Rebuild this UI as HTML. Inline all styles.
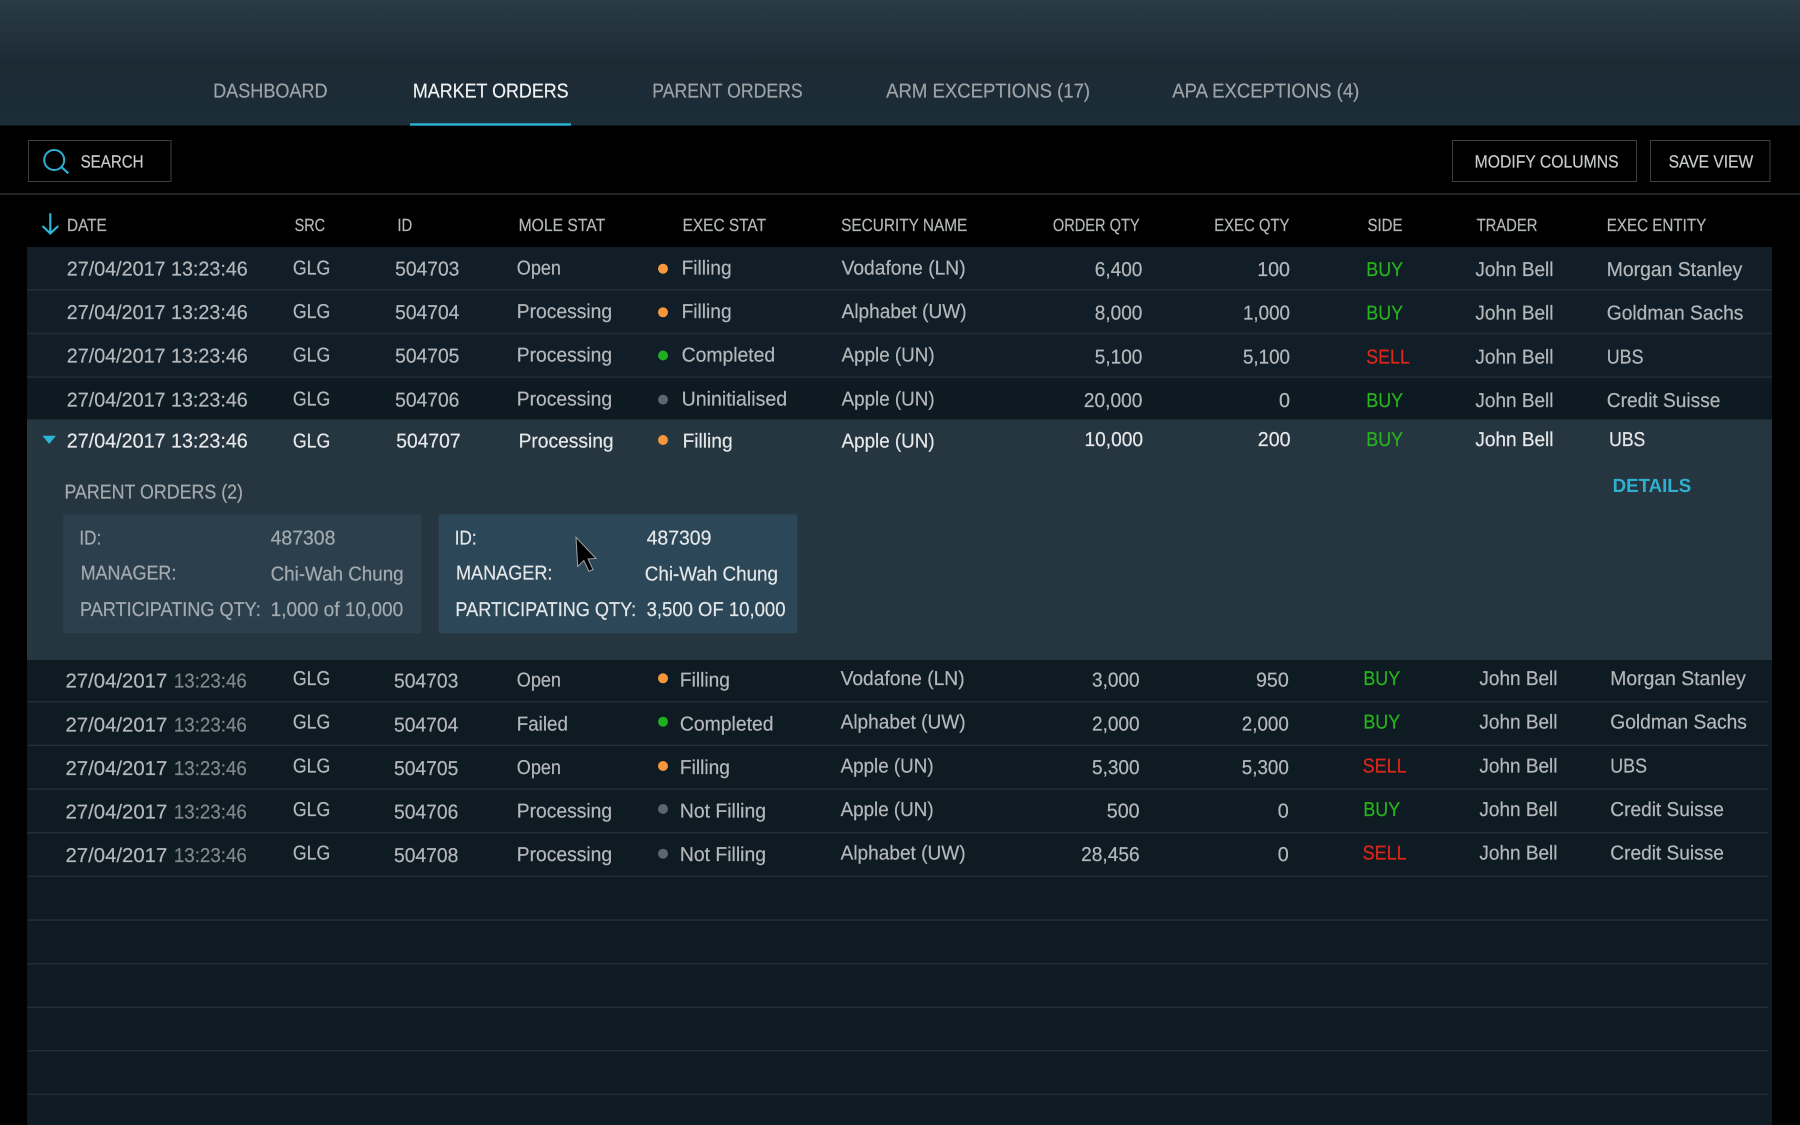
<!DOCTYPE html>
<html>
<head>
<meta charset="utf-8">
<style>
html,body{margin:0;padding:0;width:1800px;height:1125px;overflow:hidden;background:#000}
svg{display:block;position:absolute;left:0;top:0;filter:blur(.3px)}
text{font-family:"Liberation Sans",sans-serif;font-size:20px;color:#b4b8bb;fill:currentColor;stroke:currentColor;stroke-width:.2px;text-rendering:geometricPrecision;transform:translate(-.4px,-.7px)}
.tab{color:#9da3a7}
.act{color:#f0f2f3}
.sm{font-size:17.6px;color:#b3b7b9}
.btn{font-size:17.6px;color:#c8cbcd}
.w{color:#e6e8ea}
.dim{color:#81878b}
.g{color:#27b41c}
.r{color:#e0261a}
.c1{color:#a4abb0}
.c2{color:#e4e7e9}
.det{color:#2fb0d0;font-size:19px;font-weight:bold;stroke-width:0}
</style>
</head>
<body>
<svg width="1800" height="1125" viewBox="0 0 1800 1125" xmlns="http://www.w3.org/2000/svg">
<defs>
<linearGradient id="hd" x1="0" y1="0" x2="0" y2="1">
<stop offset="0" stop-color="#2a3b46"/>
<stop offset="0.5" stop-color="#1c2a34"/>
<stop offset="1" stop-color="#1c2d38"/>
</linearGradient>
</defs>
<rect width="1800" height="1125" fill="#000"/>
<rect width="1800" height="125.5" fill="url(#hd)"/>
<rect x="410" y="123.3" width="161" height="2.4" fill="#2bb5d9"/>

<text class="tab" x="213.5" y="98" textLength="114.5" lengthAdjust="spacingAndGlyphs">DASHBOARD</text>
<text class="act" x="413.3" y="98" textLength="155.7" lengthAdjust="spacingAndGlyphs">MARKET ORDERS</text>
<text class="tab" x="652.7" y="98" textLength="150.3" lengthAdjust="spacingAndGlyphs">PARENT ORDERS</text>
<text class="tab" x="886.5" y="98" textLength="204" lengthAdjust="spacingAndGlyphs">ARM EXCEPTIONS (17)</text>
<text class="tab" x="1172.7" y="98" textLength="187" lengthAdjust="spacingAndGlyphs">APA EXCEPTIONS (4)</text>

<rect x="28.5" y="140.5" width="142.5" height="41" fill="none" stroke="#3b4044"/>
<circle cx="54.2" cy="160" r="10" fill="none" stroke="#2bb0d3" stroke-width="2"/>
<path d="M61 166.7 L68.3 173.3" stroke="#2bb0d3" stroke-width="2.2" fill="none"/>
<text class="btn" x="81" y="168" textLength="63" lengthAdjust="spacingAndGlyphs">SEARCH</text>
<rect x="1452.5" y="140.5" width="184" height="41" fill="none" stroke="#3b4044"/>
<text class="btn" x="1475" y="168" textLength="144" lengthAdjust="spacingAndGlyphs">MODIFY COLUMNS</text>
<rect x="1650.5" y="140.5" width="119.5" height="41" fill="none" stroke="#3b4044"/>
<text class="btn" x="1669" y="168" textLength="84.6" lengthAdjust="spacingAndGlyphs">SAVE VIEW</text>
<rect x="0" y="193.3" width="1800" height="1.5" fill="#2b3034"/>

<path d="M50.3 213.3 V233.5 M42.5 226 L50.3 233.5 L58.2 226" fill="none" stroke="#2bb5d9" stroke-width="2.2"/>
<text class="sm" x="67.4" y="231.7" textLength="39.8" lengthAdjust="spacingAndGlyphs">DATE</text>
<text class="sm" x="295" y="231.7" textLength="30.5" lengthAdjust="spacingAndGlyphs">SRC</text>
<text class="sm" x="397.8" y="231.7" textLength="14.9" lengthAdjust="spacingAndGlyphs">ID</text>
<text class="sm" x="519" y="231.7" textLength="86.6" lengthAdjust="spacingAndGlyphs">MOLE STAT</text>
<text class="sm" x="683" y="231.7" textLength="83.4" lengthAdjust="spacingAndGlyphs">EXEC STAT</text>
<text class="sm" x="841.5" y="231.7" textLength="126.2" lengthAdjust="spacingAndGlyphs">SECURITY NAME</text>
<text class="sm" x="1053.3" y="231.7" textLength="86.7" lengthAdjust="spacingAndGlyphs">ORDER QTY</text>
<text class="sm" x="1214.6" y="231.7" textLength="75.2" lengthAdjust="spacingAndGlyphs">EXEC QTY</text>
<text class="sm" x="1367.9" y="231.7" textLength="35" lengthAdjust="spacingAndGlyphs">SIDE</text>
<text class="sm" x="1477" y="231.7" textLength="60.8" lengthAdjust="spacingAndGlyphs">TRADER</text>
<text class="sm" x="1607.2" y="231.7" textLength="99.4" lengthAdjust="spacingAndGlyphs">EXEC ENTITY</text>

<!-- table backgrounds -->
<rect x="27" y="247" width="1745" height="172.5" fill="#111e27"/>
<rect x="27" y="376" width="1745" height="43.5" fill="#0e1a22"/>
<rect x="27" y="419.5" width="1745" height="240.5" fill="#263640"/>
<rect x="27" y="660" width="1745" height="465" fill="#0f1b23"/>
<g fill="#1f2e38">
<rect x="27" y="289" width="1745" height="1.5"/>
<rect x="27" y="332.7" width="1745" height="1.5"/>
<rect x="27" y="376.3" width="1745" height="1.5"/>
<rect x="27" y="701" width="1741" height="1.5"/>
<rect x="27" y="744.6" width="1741" height="1.5"/>
<rect x="27" y="788.3" width="1741" height="1.5"/>
<rect x="27" y="832" width="1741" height="1.5"/>
<rect x="27" y="875.6" width="1741" height="1.5"/>
<rect x="27" y="919.3" width="1741" height="1.5"/>
<rect x="27" y="963" width="1741" height="1.5"/>
<rect x="27" y="1006.6" width="1741" height="1.5"/>
<rect x="27" y="1050" width="1741" height="1.5"/>
<rect x="27" y="1093.6" width="1741" height="1.5"/>
</g>

<!-- row 1 -->
<text x="67.2" y="276" textLength="181" lengthAdjust="spacingAndGlyphs">27/04/2017 13:23:46</text>
<text x="293.3" y="275" textLength="37.4" lengthAdjust="spacingAndGlyphs">GLG</text>
<text x="395.5" y="276" textLength="64.3" lengthAdjust="spacingAndGlyphs">504703</text>
<text x="517.2" y="275" textLength="44.2" lengthAdjust="spacingAndGlyphs">Open</text>
<circle cx="663" cy="268.7" r="5" fill="#f7963a"/>
<text x="682" y="275" textLength="50" lengthAdjust="spacingAndGlyphs">Filling</text>
<text x="842" y="275" textLength="124" lengthAdjust="spacingAndGlyphs">Vodafone (LN)</text>
<text x="1095.2" y="276.7" textLength="47.6" lengthAdjust="spacingAndGlyphs">6,400</text>
<text x="1257.6" y="276.7" textLength="32.8" lengthAdjust="spacingAndGlyphs">100</text>
<text class="g" x="1366.7" y="276.7" textLength="36.7" lengthAdjust="spacingAndGlyphs">BUY</text>
<text x="1475.8" y="276.7" textLength="78.1" lengthAdjust="spacingAndGlyphs">John Bell</text>
<text x="1607.2" y="276.7" textLength="135.5" lengthAdjust="spacingAndGlyphs">Morgan Stanley</text>

<!-- row 2 -->
<text x="67.2" y="319.6" textLength="181" lengthAdjust="spacingAndGlyphs">27/04/2017 13:23:46</text>
<text x="293.3" y="318.6" textLength="37.4" lengthAdjust="spacingAndGlyphs">GLG</text>
<text x="395.5" y="319.6" textLength="64.3" lengthAdjust="spacingAndGlyphs">504704</text>
<text x="517.2" y="318.6" textLength="95.3" lengthAdjust="spacingAndGlyphs">Processing</text>
<circle cx="663" cy="312.3" r="5" fill="#f7963a"/>
<text x="682" y="318.6" textLength="50" lengthAdjust="spacingAndGlyphs">Filling</text>
<text x="842" y="318.6" textLength="125" lengthAdjust="spacingAndGlyphs">Alphabet (UW)</text>
<text x="1095.2" y="320.3" textLength="47.6" lengthAdjust="spacingAndGlyphs">8,000</text>
<text x="1243.4" y="320.3" textLength="47" lengthAdjust="spacingAndGlyphs">1,000</text>
<text class="g" x="1366.7" y="320.3" textLength="36.7" lengthAdjust="spacingAndGlyphs">BUY</text>
<text x="1475.8" y="320.3" textLength="78.1" lengthAdjust="spacingAndGlyphs">John Bell</text>
<text x="1607.2" y="320.3" textLength="136.6" lengthAdjust="spacingAndGlyphs">Goldman Sachs</text>

<!-- row 3 -->
<text x="67.2" y="363.3" textLength="181" lengthAdjust="spacingAndGlyphs">27/04/2017 13:23:46</text>
<text x="293.3" y="362.3" textLength="37.4" lengthAdjust="spacingAndGlyphs">GLG</text>
<text x="395.5" y="363.3" textLength="64.3" lengthAdjust="spacingAndGlyphs">504705</text>
<text x="517.2" y="362.3" textLength="95.3" lengthAdjust="spacingAndGlyphs">Processing</text>
<circle cx="663" cy="355.5" r="5" fill="#1fae1f"/>
<text x="682" y="362" textLength="93.6" lengthAdjust="spacingAndGlyphs">Completed</text>
<text x="842" y="362.3" textLength="93" lengthAdjust="spacingAndGlyphs">Apple (UN)</text>
<text x="1095.2" y="364" textLength="47.6" lengthAdjust="spacingAndGlyphs">5,100</text>
<text x="1243.4" y="364" textLength="47" lengthAdjust="spacingAndGlyphs">5,100</text>
<text class="r" x="1366.7" y="364" textLength="43.6" lengthAdjust="spacingAndGlyphs">SELL</text>
<text x="1475.8" y="364" textLength="78.1" lengthAdjust="spacingAndGlyphs">John Bell</text>
<text x="1607.2" y="364" textLength="36.7" lengthAdjust="spacingAndGlyphs">UBS</text>

<!-- row 4 -->
<text x="67.2" y="407" textLength="181" lengthAdjust="spacingAndGlyphs">27/04/2017 13:23:46</text>
<text x="293.3" y="406" textLength="37.4" lengthAdjust="spacingAndGlyphs">GLG</text>
<text x="395.5" y="407" textLength="64.3" lengthAdjust="spacingAndGlyphs">504706</text>
<text x="517.2" y="406" textLength="95.3" lengthAdjust="spacingAndGlyphs">Processing</text>
<circle cx="663" cy="399.6" r="5" fill="#5a6670"/>
<text x="682" y="406" textLength="105.6" lengthAdjust="spacingAndGlyphs">Uninitialised</text>
<text x="842" y="406" textLength="93" lengthAdjust="spacingAndGlyphs">Apple (UN)</text>
<text x="1084.3" y="407.6" textLength="58.5" lengthAdjust="spacingAndGlyphs">20,000</text>
<text x="1279.4" y="407.6" textLength="11" lengthAdjust="spacingAndGlyphs">0</text>
<text class="g" x="1366.7" y="407.6" textLength="36.7" lengthAdjust="spacingAndGlyphs">BUY</text>
<text x="1475.8" y="407.6" textLength="78.1" lengthAdjust="spacingAndGlyphs">John Bell</text>
<text x="1607.2" y="407.6" textLength="113.6" lengthAdjust="spacingAndGlyphs">Credit Suisse</text>

<!-- expanded row -->
<path d="M42.5 435.7 H56 L49.2 444 Z" fill="#2bb5d9"/>
<text class="w" x="67.2" y="448.3" textLength="181" lengthAdjust="spacingAndGlyphs">27/04/2017 13:23:46</text>
<text class="w" x="293.3" y="448.3" textLength="37.4" lengthAdjust="spacingAndGlyphs">GLG</text>
<text class="w" x="396.7" y="448.3" textLength="64.3" lengthAdjust="spacingAndGlyphs">504707</text>
<text class="w" x="519" y="448.3" textLength="95" lengthAdjust="spacingAndGlyphs">Processing</text>
<circle cx="663" cy="440" r="5" fill="#f7963a"/>
<text class="w" x="683" y="448.3" textLength="50" lengthAdjust="spacingAndGlyphs">Filling</text>
<text class="w" x="842" y="448.3" textLength="93" lengthAdjust="spacingAndGlyphs">Apple (UN)</text>
<text class="w" x="1084.9" y="446.7" textLength="58.5" lengthAdjust="spacingAndGlyphs">10,000</text>
<text class="w" x="1258.2" y="446.7" textLength="32.8" lengthAdjust="spacingAndGlyphs">200</text>
<text class="g" x="1366.7" y="446.7" textLength="36.7" lengthAdjust="spacingAndGlyphs">BUY</text>
<text class="w" x="1475.8" y="446.7" textLength="78.1" lengthAdjust="spacingAndGlyphs">John Bell</text>
<text class="w" x="1609.5" y="446.7" textLength="36.2" lengthAdjust="spacingAndGlyphs">UBS</text>

<text class="c1" x="64.9" y="499" textLength="178.5" lengthAdjust="spacingAndGlyphs">PARENT ORDERS (2)</text>
<text class="det" x="1613" y="492.7" textLength="78.6" lengthAdjust="spacingAndGlyphs">DETAILS</text>

<rect x="63.2" y="514.3" width="358.3" height="119" rx="2" fill="#2c3f4c"/>
<rect x="438.8" y="514.3" width="358.4" height="119" rx="2" fill="#2c4757"/>

<text class="c1" x="79.8" y="545" textLength="21.8" lengthAdjust="spacingAndGlyphs">ID:</text>
<text class="c1" x="271" y="545" textLength="64.8" lengthAdjust="spacingAndGlyphs">487308</text>
<text class="c1" x="81" y="580" textLength="95.8" lengthAdjust="spacingAndGlyphs">MANAGER:</text>
<text class="c1" x="271" y="581" textLength="133" lengthAdjust="spacingAndGlyphs">Chi-Wah Chung</text>
<text class="c1" x="80.4" y="616.7" textLength="180.8" lengthAdjust="spacingAndGlyphs">PARTICIPATING QTY:</text>
<text class="c1" x="271" y="616.7" textLength="132.6" lengthAdjust="spacingAndGlyphs">1,000 of 10,000</text>

<text class="c2" x="455.2" y="545" textLength="21.8" lengthAdjust="spacingAndGlyphs">ID:</text>
<text class="c2" x="647" y="545" textLength="64.8" lengthAdjust="spacingAndGlyphs">487309</text>
<text class="c2" x="456.4" y="580" textLength="96.4" lengthAdjust="spacingAndGlyphs">MANAGER:</text>
<text class="c2" x="645.2" y="581" textLength="133.2" lengthAdjust="spacingAndGlyphs">Chi-Wah Chung</text>
<text class="c2" x="455.8" y="616.7" textLength="180.8" lengthAdjust="spacingAndGlyphs">PARTICIPATING QTY:</text>
<text class="c2" x="647" y="616.7" textLength="138.9" lengthAdjust="spacingAndGlyphs">3,500 OF 10,000</text>

<!-- cursor -->
<path d="M576 537.3 L577.7 566.5 L583.8 560.5 L589 571.5 L593 569.5 L588 559 L596 558.5 Z" fill="#000" stroke="#9aa3a8" stroke-width="1"/>

<!-- row 6 -->
<text x="65.9" y="688.3" textLength="101.8" lengthAdjust="spacingAndGlyphs">27/04/2017</text>
<text class="dim" x="174.3" y="688.3" textLength="72.9" lengthAdjust="spacingAndGlyphs">13:23:46</text>
<text x="293.3" y="685.7" textLength="37.4" lengthAdjust="spacingAndGlyphs">GLG</text>
<text x="394.4" y="688.3" textLength="64.3" lengthAdjust="spacingAndGlyphs">504703</text>
<text x="517.2" y="687.3" textLength="44.2" lengthAdjust="spacingAndGlyphs">Open</text>
<circle cx="663" cy="678.3" r="5" fill="#f7963a"/>
<text x="680.3" y="687.3" textLength="50" lengthAdjust="spacingAndGlyphs">Filling</text>
<text x="841" y="685.7" textLength="124" lengthAdjust="spacingAndGlyphs">Vodafone (LN)</text>
<text x="1092.4" y="687.3" textLength="47.6" lengthAdjust="spacingAndGlyphs">3,000</text>
<text x="1256.4" y="687.3" textLength="32.8" lengthAdjust="spacingAndGlyphs">950</text>
<text class="g" x="1363.8" y="685.7" textLength="36.7" lengthAdjust="spacingAndGlyphs">BUY</text>
<text x="1479.8" y="685.7" textLength="78.1" lengthAdjust="spacingAndGlyphs">John Bell</text>
<text x="1610.7" y="685.7" textLength="135.5" lengthAdjust="spacingAndGlyphs">Morgan Stanley</text>

<!-- row 7 -->
<text x="65.9" y="732" textLength="101.8" lengthAdjust="spacingAndGlyphs">27/04/2017</text>
<text class="dim" x="174.3" y="732" textLength="72.9" lengthAdjust="spacingAndGlyphs">13:23:46</text>
<text x="293.3" y="729.3" textLength="37.4" lengthAdjust="spacingAndGlyphs">GLG</text>
<text x="394.4" y="732" textLength="64.3" lengthAdjust="spacingAndGlyphs">504704</text>
<text x="517.2" y="731" textLength="51.1" lengthAdjust="spacingAndGlyphs">Failed</text>
<circle cx="663" cy="721.7" r="5" fill="#1fae1f"/>
<text x="680.3" y="731" textLength="93.6" lengthAdjust="spacingAndGlyphs">Completed</text>
<text x="841" y="729.3" textLength="125" lengthAdjust="spacingAndGlyphs">Alphabet (UW)</text>
<text x="1092.4" y="731" textLength="47.6" lengthAdjust="spacingAndGlyphs">2,000</text>
<text x="1242.2" y="731" textLength="47" lengthAdjust="spacingAndGlyphs">2,000</text>
<text class="g" x="1363.8" y="729.3" textLength="36.7" lengthAdjust="spacingAndGlyphs">BUY</text>
<text x="1479.8" y="729.3" textLength="78.1" lengthAdjust="spacingAndGlyphs">John Bell</text>
<text x="1610.7" y="729.3" textLength="136.6" lengthAdjust="spacingAndGlyphs">Goldman Sachs</text>

<!-- row 8 -->
<text x="65.9" y="775.6" textLength="101.8" lengthAdjust="spacingAndGlyphs">27/04/2017</text>
<text class="dim" x="174.3" y="775.6" textLength="72.9" lengthAdjust="spacingAndGlyphs">13:23:46</text>
<text x="293.3" y="773" textLength="37.4" lengthAdjust="spacingAndGlyphs">GLG</text>
<text x="394.4" y="775.6" textLength="64.3" lengthAdjust="spacingAndGlyphs">504705</text>
<text x="517.2" y="774.6" textLength="44.2" lengthAdjust="spacingAndGlyphs">Open</text>
<circle cx="663" cy="766" r="5" fill="#f7963a"/>
<text x="680.3" y="774.6" textLength="50" lengthAdjust="spacingAndGlyphs">Filling</text>
<text x="841" y="773" textLength="93" lengthAdjust="spacingAndGlyphs">Apple (UN)</text>
<text x="1092.4" y="774.6" textLength="47.6" lengthAdjust="spacingAndGlyphs">5,300</text>
<text x="1242.2" y="774.6" textLength="47" lengthAdjust="spacingAndGlyphs">5,300</text>
<text class="r" x="1363" y="773" textLength="44" lengthAdjust="spacingAndGlyphs">SELL</text>
<text x="1479.8" y="773" textLength="78.1" lengthAdjust="spacingAndGlyphs">John Bell</text>
<text x="1610.7" y="773" textLength="36.7" lengthAdjust="spacingAndGlyphs">UBS</text>

<!-- row 9 -->
<text x="65.9" y="819.3" textLength="101.8" lengthAdjust="spacingAndGlyphs">27/04/2017</text>
<text class="dim" x="174.3" y="819.3" textLength="72.9" lengthAdjust="spacingAndGlyphs">13:23:46</text>
<text x="293.3" y="816.6" textLength="37.4" lengthAdjust="spacingAndGlyphs">GLG</text>
<text x="394.4" y="819.3" textLength="64.3" lengthAdjust="spacingAndGlyphs">504706</text>
<text x="517.2" y="818.3" textLength="95.3" lengthAdjust="spacingAndGlyphs">Processing</text>
<circle cx="663" cy="809" r="5" fill="#5a6670"/>
<text x="680.3" y="818.3" textLength="86.1" lengthAdjust="spacingAndGlyphs">Not Filling</text>
<text x="841" y="816.6" textLength="93" lengthAdjust="spacingAndGlyphs">Apple (UN)</text>
<text x="1107.2" y="818.3" textLength="32.8" lengthAdjust="spacingAndGlyphs">500</text>
<text x="1278.2" y="818.3" textLength="11" lengthAdjust="spacingAndGlyphs">0</text>
<text class="g" x="1363.8" y="816.6" textLength="36.7" lengthAdjust="spacingAndGlyphs">BUY</text>
<text x="1479.8" y="816.6" textLength="78.1" lengthAdjust="spacingAndGlyphs">John Bell</text>
<text x="1610.7" y="816.6" textLength="113.6" lengthAdjust="spacingAndGlyphs">Credit Suisse</text>

<!-- row 10 -->
<text x="65.9" y="862.9" textLength="101.8" lengthAdjust="spacingAndGlyphs">27/04/2017</text>
<text class="dim" x="174.3" y="862.9" textLength="72.9" lengthAdjust="spacingAndGlyphs">13:23:46</text>
<text x="293.3" y="860.3" textLength="37.4" lengthAdjust="spacingAndGlyphs">GLG</text>
<text x="394.4" y="862.9" textLength="64.3" lengthAdjust="spacingAndGlyphs">504708</text>
<text x="517.2" y="861.9" textLength="95.3" lengthAdjust="spacingAndGlyphs">Processing</text>
<circle cx="663" cy="853.7" r="5" fill="#5a6670"/>
<text x="680.3" y="861.9" textLength="86.1" lengthAdjust="spacingAndGlyphs">Not Filling</text>
<text x="841" y="860.3" textLength="125" lengthAdjust="spacingAndGlyphs">Alphabet (UW)</text>
<text x="1081.5" y="861.9" textLength="58.5" lengthAdjust="spacingAndGlyphs">28,456</text>
<text x="1278.2" y="861.9" textLength="11" lengthAdjust="spacingAndGlyphs">0</text>
<text class="r" x="1363" y="860.3" textLength="44" lengthAdjust="spacingAndGlyphs">SELL</text>
<text x="1479.8" y="860.3" textLength="78.1" lengthAdjust="spacingAndGlyphs">John Bell</text>
<text x="1610.7" y="860.3" textLength="113.6" lengthAdjust="spacingAndGlyphs">Credit Suisse</text>
</svg>
</body>
</html>
